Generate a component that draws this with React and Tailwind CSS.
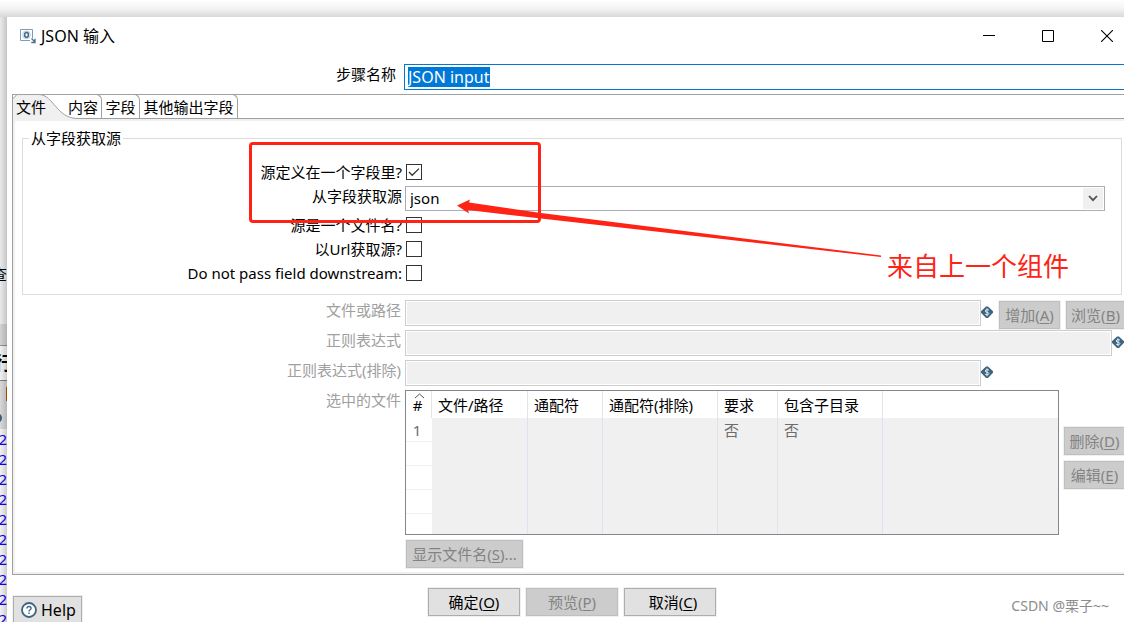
import { useEffect, useRef, useState } from 'react'

const columns = [
  { title: '文件/路径', width: 'w-[96px]' },
  { title: '通配符', width: 'w-[75px]' },
  { title: '通配符(排除)', width: 'w-[115px]' },
  { title: '要求', width: 'w-[60px]' },
  { title: '包含子目录', width: 'w-[105px]' },
  { title: '', width: '' },
]

const rows = [
  { id: 1, cells: ['', '', '', '否', '否', ''] },
  { id: 2, cells: ['', '', '', '', '', ''] },
  { id: 3, cells: ['', '', '', '', '', ''] },
  { id: 4, cells: ['', '', '', '', '', ''] },
  { id: 5, cells: ['', '', '', '', '', ''] },
]

function StepIcon() {
  return (
    <svg width="16" height="16" viewBox="0 0 16 16" fill="none">
      <path d="M10 12.5H0.5V1.5H12.5V10" stroke="#7f9db5" />
      <ellipse cx="6.5" cy="6.8" rx="1.9" ry="2.5" stroke="#44708f" strokeWidth="1.7" />
      <circle cx="6.5" cy="6.8" r="3.9" stroke="#b4c7d6" strokeWidth="0.9" />
      <path d="M11.5 10.5l3 3M15 10.8v3.7h-3.7" stroke="#44708f" strokeWidth="1.3" />
    </svg>
  )
}

function VarIcon() {
  return (
    <svg className="mt-1.5 shrink-0 self-start" width="12" height="13" viewBox="0 0 12 13">
      <path d="M5 0.5H7L12 5.3V6.7L7 12H5L0 6.7V5.3Z" fill="#3d6480" />
      <path d="M8 4.4C7.5 3.4 4.2 3.4 4.2 5C4.2 6.6 7.9 5.8 7.9 7.6C7.9 9.2 4.5 9 3.9 8M6 2.3V10.2" stroke="#e6edf2" strokeWidth="1" fill="none" />
    </svg>
  )
}

function Button({ label, hotkey, tail = '', disabled, className = '' }) {
  const look = disabled
    ? 'bg-[#cccccc] border-[#bfbfbf] text-[#838383]'
    : 'bg-[#e1e1e1] border-[#adadad] text-black'
  return (
    <button
      type="button"
      disabled={disabled}
      className={`h-7 shrink-0 border text-center whitespace-nowrap outline outline-[#f0f0f0] ${look} ${className}`}
    >
      {label}(<span className="underline underline-offset-2">{hotkey}</span>){tail}
    </button>
  )
}

function CheckRow({ id, label, checked }) {
  const [on, setOn] = useState(!!checked)
  return (
    <div className="flex h-6 items-center">
      <label htmlFor={id} className="w-[379px] shrink-0 text-right">{label}</label>
      <span className="relative ml-1 flex">
        <input
          id={id}
          type="checkbox"
          checked={on}
          onChange={e => setOn(e.target.checked)}
          className="size-4 appearance-none border border-[#333] bg-white"
        />
        {on && (
          <svg className="pointer-events-none absolute inset-0" width="16" height="16" viewBox="0 0 16 16">
            <path d="M3 8l3.2 3.3L13 4.6" stroke="#333" strokeWidth="1.3" fill="none" />
          </svg>
        )}
      </span>
    </div>
  )
}

function FieldRow({ id, label, children }) {
  return (
    <div className="flex h-[26px]">
      <label htmlFor={id} className="w-[386px] shrink-0 text-right text-[#a0a0a0]">{label}</label>
      <input
        id={id}
        disabled
        className="ml-1 min-w-0 flex-1 border border-[#cccccc] bg-[#f0f0f0] px-1 outline outline-white -outline-offset-2"
      />
      <VarIcon />
      {children}
    </div>
  )
}

function Tab({ label, className }) {
  return (
    <button type="button" role="tab" className={`-mt-px h-6 shrink-0 rounded-tr-md border-t border-r border-[#a0a0a0] whitespace-nowrap ${className}`}>
      {label}
    </button>
  )
}

// Sliver of the main window that stays visible left of the dialog
function Backdrop() {
  return (
    <div className="relative flex w-[7px] shrink-0 flex-col overflow-hidden bg-[#f7f7f7]">
      <div className="flex h-[307px] shrink-0 items-end justify-end pb-10">
        <span>查</span>
      </div>
      <div className="h-[22px] shrink-0 border-b border-[#999] bg-[#dedede]" />
      <div className="flex h-[35px] shrink-0 items-center justify-center border-b border-[#888] bg-white text-lg font-bold">
        <span>行</span>
      </div>
      <div className="flex h-12 shrink-0 flex-col bg-[#e4e4e4]">
        <div className="mt-1.5 h-3.5 w-px self-end bg-[#c06000]" />
        <div className="mt-3 -ml-2 size-2.5 rounded-full bg-[#3d6480]" />
      </div>
      <div className="flex shrink-0 flex-col items-end bg-white text-[#1400ff]">
        {Array.from({ length: 10 }, (_, i) => (
          <span key={i} className="h-5">02</span>
        ))}
      </div>
      <div className="absolute inset-0 bg-linear-to-r from-black/5 to-black/20" />
    </div>
  )
}

function FilesTable() {
  return (
    <div className="ml-1 h-[145px] min-w-0 flex-1 overflow-hidden border border-[#828790] bg-[#f0f0f0]">
      <table className="w-full table-fixed border-separate border-spacing-0 text-left">
        <thead>
          <tr className="h-[27px] bg-white">
            <th className="relative w-[26px] border-r border-[#e5e5e5] py-0 pr-0.5 pl-0 text-center font-normal">
              <svg className="absolute top-0.5 left-2" width="11" height="6" viewBox="0 0 11 6">
                <path d="M1 5L5.5 1L10 5" stroke="#555" fill="none" />
              </svg>
              #
            </th>
            {columns.map((col, i) => (
              <th key={i} className={`border-[#e5e5e5] py-0 pr-0 pl-1.5 font-normal whitespace-nowrap ${col.width} ${col.width ? 'border-r' : ''}`}>
                {col.title}
              </th>
            ))}
          </tr>
        </thead>
        <tbody className="text-[#6d6d6d]">
          {rows.map(row => (
            <tr key={row.id} className="h-6">
              <td className="border-b border-[#f0f0f0] bg-white py-0 pr-1 pl-0 text-center">{row.id === 1 ? row.id : ''}</td>
              {row.cells.map((cell, i) => (
                <td key={i} className={`border-[#dbe3ef] py-0 pr-0 pl-1.5 ${i < 5 ? 'border-r' : ''}`}>{cell}</td>
              ))}
            </tr>
          ))}
        </tbody>
      </table>
    </div>
  )
}

export default function App() {
  const nameRef = useRef(null)

  useEffect(() => {
    nameRef.current.focus()
    nameRef.current.select()
  }, [])

  return (
    <div className="relative flex h-screen flex-col overflow-hidden bg-white font-['Noto_Sans','Noto_Sans_CJK_SC',sans-serif] text-[15px] leading-5 text-black">
      <div className="h-[17px] shrink-0 bg-linear-to-b from-white via-[#f4f4f4] to-[#d8d8d8]" />
      <div className="flex min-h-0 flex-1">
        <Backdrop />
        <main className="flex min-w-0 flex-1 flex-col bg-white pl-[5px]">
          <header className="flex h-[38px] shrink-0 items-center pl-2">
            <StepIcon />
            <h1 className="ml-[5px] text-[16px]">JSON 输入</h1>
            <div className="ml-auto flex gap-[47px] pr-[11px]">
              <button type="button" aria-label="最小化">
                <svg width="12" height="12" viewBox="0 0 12 12"><path d="M0 5.5H12" stroke="#000" /></svg>
              </button>
              <button type="button" aria-label="最大化">
                <svg width="12" height="12" viewBox="0 0 12 12"><path d="M0.5 0.5H11.5V11.5H0.5Z" stroke="#000" fill="none" /></svg>
              </button>
              <button type="button" aria-label="关闭">
                <svg width="12" height="12" viewBox="0 0 12 12"><path d="M0 0L12 12M12 0L0 12" stroke="#000" strokeWidth="1.1" /></svg>
              </button>
            </div>
          </header>

          <div className="mt-[9px] flex h-[26px] shrink-0">
            <label htmlFor="step" className="w-[384px] shrink-0 text-right">步骤名称</label>
            <input
              id="step"
              ref={nameRef}
              defaultValue="JSON input"
              className="ml-2 min-w-0 flex-1 border border-r-0 border-[#0078d7] px-[3px] text-[16px] outline-none selection:bg-[#0078d7] selection:text-white"
            />
          </div>

          <div role="tablist" className="mt-1 flex h-[25px] shrink-0 border-y border-l border-[#a0a0a0]">
            <button type="button" role="tab" aria-selected="true" className="relative w-[52px] shrink-0 pl-[3px] text-left">
              <svg className="absolute -top-px -left-px" width="66" height="25" viewBox="0 0 66 25">
                <path d="M0.5 25V5L5 0.5H27C42 1 44 24.5 66 24.5V25Z" fill="#f0f0f0" />
                <path d="M0.5 25V5L5 0.5H27C42 1 44 24.5 66 24.5" stroke="#a0a0a0" fill="none" />
              </svg>
              <span className="relative">文件</span>
            </button>
            <Tab label="内容" className="w-[37px]" />
            <Tab label="字段" className="w-[38px]" />
            <Tab label="其他输出字段" className="w-[98px]" />
          </div>

          <section className="flex shrink-0 flex-col border-b border-l border-[#a0a0a0]">
            <div className="border-y-2 border-l-2 border-[#f0f0f0] pt-[7px] pb-1">
              <fieldset className="mr-0.5 ml-[7px] border border-[#dcdcdc] pb-[9px]">
                <legend className="ml-1.5 px-0.5">从字段获取源</legend>
                <div className="pt-3">
                  <CheckRow id="in-field" label="源定义在一个字段里?" checked />
                  <div className="my-0.5 flex h-[25px]">
                    <label htmlFor="source" className="w-[379px] shrink-0 text-right">从字段获取源</label>
                    <div className="relative mr-4 ml-[3px] flex min-w-0 flex-1">
                      <select id="source" className="w-full appearance-none border border-[#acacb4] bg-white pb-0.5 pl-1">
                        <option>json</option>
                      </select>
                      <span className="pointer-events-none absolute top-0.5 right-0.5 flex h-[21px] w-5 items-center justify-center bg-[#f0f0f0]">
                        <svg width="10" height="7" viewBox="0 0 10 7">
                          <path d="M1 1L5 5.2L9 1" stroke="#505050" strokeWidth="1.8" fill="none" />
                        </svg>
                      </span>
                    </div>
                  </div>
                  <CheckRow id="is-filename" label="源是一个文件名?" />
                  <CheckRow id="as-url" label="以Url获取源?" />
                  <CheckRow id="no-pass" label="Do not pass field downstream:" />
                </div>
              </fieldset>

              <div className="mt-[5px] flex flex-col gap-1">
                <FieldRow id="path" label="文件或路径">
                  <Button label="增加" hotkey="A" disabled className="mt-px ml-1.5 w-[61px]" />
                  <Button label="浏览" hotkey="B" disabled className="mt-px ml-1.5 w-[58px] border-r-0" />
                </FieldRow>
                <FieldRow id="regex" label="正则表达式" />
                <div className="flex">
                  <div className="min-w-0 flex-1">
                    <FieldRow id="exclude" label="正则表达式(排除)" />
                  </div>
                  <div className="w-[131px] shrink-0" />
                </div>
                <div className="flex">
                  <span className="w-[386px] shrink-0 text-right text-[#a0a0a0]">选中的文件</span>
                  <FilesTable />
                  <div className="ml-[5px] flex flex-col gap-1.5 pt-[37px]">
                    <Button label="删除" hotkey="D" disabled className="w-[60px] border-r-0" />
                    <Button label="编辑" hotkey="E" disabled className="w-[60px] border-r-0" />
                  </div>
                </div>
              </div>
              <Button label="显示文件名" hotkey="S" tail="..." disabled className="mt-[5px] ml-[391px] block w-[117px]" />
            </div>
          </section>

          <footer className="flex shrink-0 items-start pt-[13px]">
            <button type="button" className="mt-2 ml-px flex h-7 w-[69px] items-center gap-1 border border-[#adadad] bg-[#e1e1e1] pl-[7px] text-[16px] outline outline-[#f0f0f0]">
              <svg width="16" height="16" viewBox="0 0 16 16" fill="none">
                <circle cx="8" cy="8" r="7" fill="#fff" stroke="#3d6480" strokeWidth="1.8" />
                <path d="M5.9 6.4C5.9 3.8 10.1 3.9 10.1 6.3C10.1 7.8 8 7.7 8 9.4M8 10.6V12" stroke="#3d6480" strokeWidth="1.4" />
              </svg>
              Help
            </button>
            <div className="ml-[346px] flex gap-1.5">
              <Button label="确定" hotkey="O" className="w-[92px]" />
              <Button label="预览" hotkey="P" disabled className="w-[92px]" />
              <Button label="取消" hotkey="C" className="w-[92px] pl-1.5" />
            </div>
            <span className="mt-2 mr-[15px] ml-auto text-sm text-[#8c8c8c]">CSDN @栗子~~</span>
          </footer>
        </main>
      </div>

      {/* red markup drawn over the dialog */}
      <div className="pointer-events-none absolute top-[142px] left-[249px] h-[81px] w-[292px] rounded-sm border-3 border-[#ff2316]" />
      <svg className="pointer-events-none absolute top-[198px] left-[457px]" width="425" height="60" viewBox="0 0 425 60">
        <path d="M0 7.5L13 1.5L12 4.5L84 15L424 57.5L424 59L84 20.5L11 12L12 15.5Z" fill="#ff2316" />
      </svg>
      <span className="pointer-events-none absolute top-[250px] left-[887px] text-[26px] leading-8 text-[#ff2316]">来自上一个组件</span>
    </div>
  )
}
